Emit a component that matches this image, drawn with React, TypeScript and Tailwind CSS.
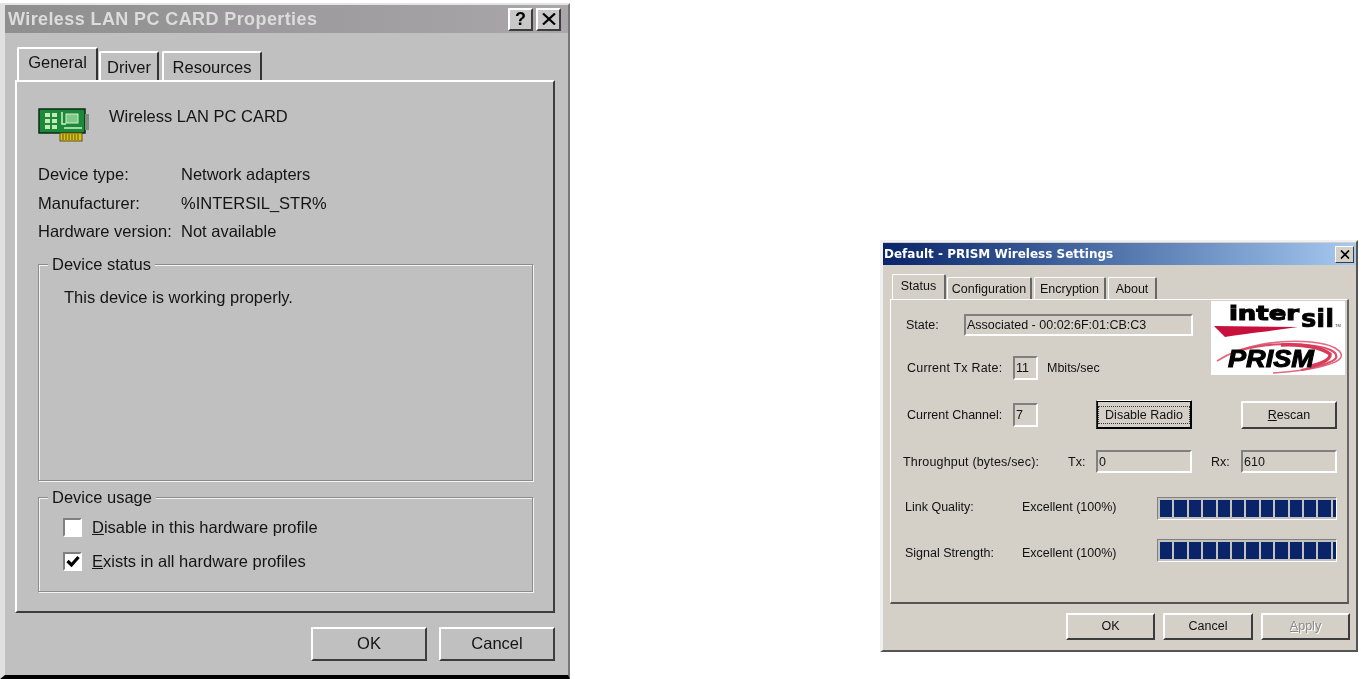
import React from 'react'

const raised = 'border-2 border-t-white border-l-white border-r-[#3c3c3c] border-b-[#3c3c3c]'
const sunken = 'border-2 border-t-[#808080] border-l-[#808080] border-r-white border-b-white'

function PcCardIcon() {
  return (
    <svg width="52" height="34" viewBox="0 0 52 34">
      <rect x="1" y="1" width="46" height="24" fill="#1a8a3a" stroke="#0b2a14" strokeWidth="1.5" />
      <rect x="47" y="6" width="4" height="16" fill="#7f8c80" />
      <g fill="#c4e8b8">
        <rect x="7" y="5" width="5" height="4" />
        <rect x="14" y="5" width="5" height="4" />
        <rect x="7" y="11" width="5" height="4" />
        <rect x="14" y="11" width="5" height="4" />
        <rect x="7" y="17" width="5" height="4" />
        <rect x="14" y="17" width="5" height="4" />
      </g>
      <rect x="28" y="6" width="12" height="9" fill="#7fc78a" stroke="#d4f0c8" />
      <path d="M24 4v12h4M26 20h18" stroke="#d4f0c8" strokeWidth="1.5" fill="none" />
      <rect x="22" y="25" width="22" height="8" fill="#d9c21a" stroke="#5d5410" />
      <path d="M25 26v6M28 26v6M31 26v6M34 26v6M37 26v6M40 26v6" stroke="#5d5410" />
    </svg>
  )
}

function OldButton({ label, className }: { label: React.ReactNode; className: string }) {
  return (
    <div className={`flex items-center justify-center bg-[#c0c0c0] pb-[3px] ${raised} ${className}`}>{label}</div>
  )
}

function GroupBox({ title, className, children }: { title: string; className: string; children: React.ReactNode }) {
  return (
    <div className={`border border-[#8c8c8c] shadow-[inset_1px_1px_0_#f4f4f4,1px_1px_0_#f4f4f4] ${className}`}>
      <span className="ml-[9px] -mt-[12px] block w-fit bg-[#c0c0c0] px-[4px] leading-[22px]">{title}</span>
      {children}
    </div>
  )
}

function OldCheckbox({ checked }: { checked?: boolean }) {
  return (
    <div className={`flex h-[19px] w-[19px] items-center justify-center bg-white ${sunken}`}>
      {checked && (
        <svg width="14" height="13" viewBox="0 0 14 13">
          <path d="M1.5 6l4 4 7-8" stroke="#000" strokeWidth="3.2" fill="none" />
        </svg>
      )}
    </div>
  )
}

function PropertiesDialog() {
  return (
    <div className="mt-[3px] flex h-[676px] w-[570px] shrink-0 flex-col border-t-2 border-r-2 border-b-4 border-l-[5px] border-t-[#e4e4e4] border-r-[#777777] border-b-black border-l-[#e0e0e0] bg-[#c0c0c0] text-[16.5px] leading-[22px] whitespace-nowrap text-[#141414] blur-[0.5px] [font-family:'Liberation_Sans',sans-serif]">
      <div className="flex h-[28px] items-center justify-between bg-gradient-to-r from-[#8f8f8f] to-[#aaa6aa] pr-[7px] pl-[3px]">
        <span className="text-[18px] font-bold tracking-[0.4px] text-[#dcdcdc]">Wireless LAN PC CARD Properties</span>
        <div className="flex gap-[3px]">
          <div className={`flex h-[23px] w-[25px] items-center justify-center bg-[#c8c8c8] text-[18px] font-bold text-black ${raised}`}>?</div>
          <div className={`flex h-[23px] w-[25px] items-center justify-center bg-[#c8c8c8] ${raised}`}>
            <svg width="14" height="12" viewBox="0 0 14 12">
              <path d="M1 0.5l12 11M13 0.5l-12 11" stroke="#000" strokeWidth="2.2" />
            </svg>
          </div>
        </div>
      </div>

      <div className="mt-[15px] ml-[12px] flex h-[32px] items-end">
        <div className="flex h-[33px] w-[81px] items-start justify-center rounded-t-[2px] border-t-2 border-r-2 border-l-2 border-t-white border-r-[#333333] border-l-white bg-[#c0c0c0] pt-[2px]">General</div>
        <div className="ml-[1px] flex h-[29px] w-[60px] items-center justify-center rounded-t-[2px] border-t-2 border-r-2 border-l-2 border-t-white border-r-[#333333] border-l-white">Driver</div>
        <div className="ml-[3px] flex h-[29px] w-[100px] items-center justify-center rounded-t-[2px] border-t-2 border-r-2 border-l-2 border-t-white border-r-[#333333] border-l-white">Resources</div>
      </div>

      <div className={`ml-[10px] flex h-[533px] w-[540px] flex-col pl-[21px] ${raised}`}>
        <div className="mt-[26px] flex h-[32px] items-start">
          <PcCardIcon />
          <span className="ml-[19px] -mt-[3px]">Wireless LAN PC CARD</span>
        </div>
        <div className="mt-[19px] flex h-[29px] items-center"><span className="w-[143px]">Device type:</span><span>Network adapters</span></div>
        <div className="flex h-[29px] items-center"><span className="w-[143px]">Manufacturer:</span><span>%INTERSIL_STR%</span></div>
        <div className="flex h-[28px] items-center"><span className="w-[143px]">Hardware version:</span><span>Not available</span></div>

        <GroupBox title="Device status" className="mt-[19px] h-[217px] w-[495px]">
          <div className="mt-[11px] ml-[25px]">This device is working properly.</div>
        </GroupBox>
        <GroupBox title="Device usage" className="mt-[16px] h-[95px] w-[495px]">
          <div className="mt-[8px] ml-[24px] flex h-[22px] items-center gap-[10px]">
            <OldCheckbox />
            <span><u>D</u>isable in this hardware profile</span>
          </div>
          <div className="mt-[12px] ml-[24px] flex h-[22px] items-center gap-[10px]">
            <OldCheckbox checked />
            <span><u>E</u>xists in all hardware profiles</span>
          </div>
        </GroupBox>
      </div>

      <div className="mt-[14px] ml-[306px] flex gap-[12px]">
        <OldButton label="OK" className="h-[34px] w-[116px]" />
        <OldButton label="Cancel" className="h-[34px] w-[116px]" />
      </div>
    </div>
  )
}

function IntersilLogo() {
  return (
    <div className="mt-[1px] h-[74px] w-[134px] bg-white">
      <svg width="134" height="74" viewBox="0 0 134 74">
        <path d="M6 60C30 44 70 38 100 41C122 43 132 50 130 56C127 64 95 70 62 72" stroke="#e06a80" strokeWidth="1.6" fill="none" />
        <path d="M30 49C55 42 85 42 104 45C118 47 127 51 125 57C122 62 105 66 90 69" stroke="#dc4c68" strokeWidth="2.2" fill="none" />
        <path d="M70 44C90 43 110 46 119 53C120 59 108 63 100 65" stroke="#d83a58" strokeWidth="3.4" fill="none" />
        <text x="18" y="19" fontFamily="'DejaVu Sans'" fontWeight="700" fontSize="20" textLength="70" lengthAdjust="spacingAndGlyphs" stroke="#000" strokeWidth="1.1" fill="#000">inter</text>
        <text x="90" y="26" fontFamily="'DejaVu Sans'" fontWeight="700" fontSize="24" textLength="33" lengthAdjust="spacingAndGlyphs" stroke="#000" strokeWidth="0.7" fill="#000">sil</text>
        <text x="124" y="26" fontFamily="'Liberation Sans'" fontSize="4" fill="#333">TM</text>
        <path d="M3 25L87 26C60 30 30 33 14 36Z" fill="#c8103c" />
        <text x="17" y="66" fontFamily="'Liberation Sans'" fontWeight="700" fontStyle="italic" fontSize="24" textLength="86" lengthAdjust="spacingAndGlyphs" stroke="#000" strokeWidth="1" fill="#000">PRISM</text>
      </svg>
    </div>
  )
}

function WinButton({ label, className }: { label: React.ReactNode; className: string }) {
  return (
    <div className={`flex items-center justify-center ${raised} ${className}`}>{label}</div>
  )
}

function ReadOnlyField({ value, className }: { value: string; className: string }) {
  return (
    <div className={`flex items-center pl-[1px] ${sunken} ${className}`}>{value}</div>
  )
}

function SignalBar() {
  return (
    <div className="flex h-[23px] w-[180px] gap-[2px] overflow-hidden border border-t-[#808080] border-r-white border-b-white border-l-[#808080] bg-[#c4c2bc] p-[2px]">
      {Array.from({ length: 13 }).map((_, i) => (
        <div key={i} className="h-full w-[12.4px] shrink-0 bg-[#0a246a]" />
      ))}
    </div>
  )
}

function SettingsDialog() {
  return (
    <div className="mt-[240px] ml-[310px] flex h-[412px] w-[478px] shrink-0 flex-col border-t-2 border-r-2 border-b-2 border-l-[3px] border-t-[#f0f0f0] border-r-[#555555] border-b-[#555555] border-l-[#f0f0f0] bg-[#d4d0c8] text-[12.5px] leading-[16px] whitespace-nowrap text-[#111111] blur-[0.3px] [font-family:'Liberation_Sans',sans-serif]">
      <div className="mt-[1px] flex h-[22px] items-center justify-between bg-gradient-to-r from-[#0a246a] to-[#a6caf0] pr-[2px] pl-[1px]">
        <span className="text-[12px] font-bold text-white [font-family:'DejaVu_Sans',sans-serif]">Default - PRISM Wireless Settings</span>
        <div className="flex h-[17px] w-[19px] items-center justify-center border border-t-white border-r-[#3c3c3c] border-b-[#3c3c3c] border-l-white bg-[#d4d0c8]">
          <svg width="10" height="9" viewBox="0 0 10 9">
            <path d="M1 0.5l8 8M9 0.5l-8 8" stroke="#000" strokeWidth="1.7" />
          </svg>
        </div>
      </div>

      <div className="mt-[10px] ml-[9px] flex h-[24px] items-end">
        <div className="flex h-[25px] w-[54px] items-start justify-center rounded-t-[2px] border-t border-r-2 border-l border-t-white border-r-[#666666] border-l-white pt-[3px]">Status</div>
        <div className="ml-[1px] flex h-[22px] w-[85px] items-center justify-center rounded-t-[2px] border-t border-r-2 border-l border-t-white border-r-[#666666] border-l-white">Configuration</div>
        <div className="ml-[2px] flex h-[22px] w-[72px] items-center justify-center rounded-t-[2px] border-t border-r-2 border-l border-t-white border-r-[#666666] border-l-white">Encryption</div>
        <div className="ml-[2px] flex h-[22px] w-[49px] items-center justify-center rounded-t-[2px] border-t border-r-2 border-l border-t-white border-r-[#666666] border-l-white">About</div>
      </div>

      <div className="ml-[7px] flex h-[305px] w-[459px] flex-col border-t border-r-2 border-b-2 border-l border-t-white border-r-[#666666] border-b-[#555555] border-l-white">
        <div className="flex h-[77px] items-start">
          <div className="w-[320px] pt-[14px]">
            <div className="flex h-[22px] items-center">
              <span className="ml-[15px] w-[58px]">State:</span>
              <ReadOnlyField value="Associated - 00:02:6F:01:CB:C3" className="h-[22px] w-[229px]" />
            </div>
            <div className="mt-[20px] flex h-[24px] items-center">
              <span className="ml-[16px] w-[106px] tracking-[0.2px]">Current Tx Rate:</span>
              <ReadOnlyField value="11" className="h-[24px] w-[25px]" />
              <span className="ml-[9px]">Mbits/sec</span>
            </div>
          </div>
          <IntersilLogo />
        </div>

        <div className="mt-[23px] flex h-[29px] items-center">
          <span className="ml-[16px] w-[106px]">Current Channel:</span>
          <ReadOnlyField value="7" className="h-[24px] w-[25px]" />
          <div className="ml-[58px] flex h-[29px] w-[96px] items-center justify-center border-2 border-t-white border-r-black border-b-black border-l-[#333333] outline outline-1 -outline-offset-2 outline-black">
            <span className="border border-dotted border-[#333333] px-[6px]">Disable Radio</span>
          </div>
          <WinButton label={<span><u>R</u>escan</span>} className="ml-[49px] h-[28px] w-[96px]" />
        </div>

        <div className="mt-[21px] flex h-[23px] items-center">
          <span className="ml-[12px] w-[165px] tracking-[0.18px]">Throughput (bytes/sec):</span>
          <span className="w-[28px]">Tx:</span>
          <ReadOnlyField value="0" className="h-[23px] w-[96px]" />
          <span className="ml-[19px] w-[30px]">Rx:</span>
          <ReadOnlyField value="610" className="h-[23px] w-[96px]" />
        </div>

        <div className="mt-[24px] flex h-[23px] items-center">
          <span className="ml-[14px] -mt-[4px] w-[117px]">Link Quality:</span>
          <span className="-mt-[4px] w-[135px]">Excellent (100%)</span>
          <SignalBar />
        </div>
        <div className="mt-[19px] flex h-[23px] items-center">
          <span className="mt-[4px] ml-[14px] w-[117px]">Signal Strength:</span>
          <span className="mt-[4px] w-[135px]">Excellent (100%)</span>
          <SignalBar />
        </div>
      </div>

      <div className="mt-[9px] ml-[183px] flex gap-[8px]">
        <WinButton label="OK" className="h-[27px] w-[89px] pb-[2px]" />
        <WinButton label="Cancel" className="h-[27px] w-[90px] pb-[2px]" />
        <WinButton label={<span className="text-[#8a8a8a] [text-shadow:1px_1px_0_#fff]"><u>A</u>pply</span>} className="h-[27px] w-[89px] pb-[2px]" />
      </div>
    </div>
  )
}

export default function App() {
  return (
    <div className="flex h-[679px] w-[1361px] items-start overflow-hidden bg-white">
      <PropertiesDialog />
      <SettingsDialog />
    </div>
  )
}
